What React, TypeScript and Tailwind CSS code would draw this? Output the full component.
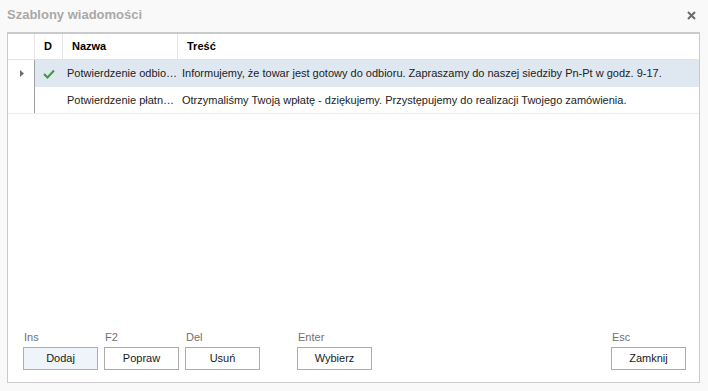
import React from "react";

type Szablon = { id: number; domyslny: boolean; nazwa: string; tresc: string };

// nazwy skrócone tak, jak pokazuje je siatka
const szablony: Szablon[] = [
  {
    id: 1,
    domyslny: true,
    nazwa: "Potwierdzenie odbio…",
    tresc: "Informujemy, że towar jest gotowy do odbioru. Zapraszamy do naszej siedziby Pn-Pt w godz. 9-17.",
  },
  {
    id: 2,
    domyslny: false,
    nazwa: "Potwierdzenie płatn…",
    tresc: "Otrzymaliśmy Twoją wpłatę - dziękujemy. Przystępujemy do realizacji Twojego zamówienia.",
  },
];

function Przycisk({ skrot, tekst, aktywny }: { skrot: string; tekst: string; aktywny?: boolean }) {
  return (
    <div className="flex flex-col w-[75px]">
      <span className="text-[11px] leading-[13px] text-[#707070] pl-[1px] mb-[3px]">{skrot}</span>
      <button
        className={
          aktywny
            ? "h-[23px] border border-[#9ab3c8] bg-[#eef4f9] text-[11px] text-[#1a1a1a]"
            : "h-[23px] border border-[#ababab] bg-white text-[11px] text-[#1a1a1a]"
        }
      >
        {tekst}
      </button>
    </div>
  );
}

export default function App() {
  return (
    <div
      className="w-[708px] h-[391px] bg-[#f9f9f9] flex flex-col"
      style={{ fontFamily: '"Liberation Sans", Arial, sans-serif' }}
    >
      {/* Pasek tytułu */}
      <div className="h-[32px] flex items-center justify-between pl-[7px] pr-[12px]">
        <span className="text-[13px] font-bold text-[#a9a9a9] -mt-[2px]">Szablony wiadomości</span>
        <svg width="9" height="9" viewBox="0 0 9 9" className="-mt-[2px]">
          <path d="M1 1 L8 8 M8 1 L1 8" stroke="#6b6b6b" strokeWidth="2" />
        </svg>
      </div>

      {/* Panel z listą */}
      <div className="ml-[7px] mr-[8px] h-[351px] bg-white border border-[#cacaca] border-t-2 flex flex-col">
        <div className="flex h-[26px] border-b border-[#e3e3e3] text-[11px] font-bold text-black">
          <div className="w-[27px] border-r border-[#e6e6e6]" />
          <div className="w-[28px] border-r border-[#e6e6e6] flex items-center justify-center pr-[1px]">D</div>
          <div className="w-[115px] border-r border-[#e6e6e6] flex items-center pl-[9px]">Nazwa</div>
          <div className="flex-1 flex items-center pl-[9px]">Treść</div>
        </div>

        {szablony.map((s, i) => (
          <div
            key={s.id}
            className={
              i === 0
                ? "flex h-[27px] text-[11px] text-[#222] bg-[#dfe8f1]"
                : "flex h-[27px] text-[11px] text-[#222] border-b border-[#ececec]"
            }
          >
            <div className="w-[27px] border-r border-[#a0a0a0] bg-white flex items-center justify-center pl-[1px]">
              {i === 0 && (
                <svg width="4" height="7" viewBox="0 0 4 7">
                  <path d="M0 0 L4 3.5 L0 7 Z" fill="#6e6e6e" />
                </svg>
              )}
            </div>
            <div className="w-[28px] flex items-center justify-center">
              {s.domyslny && (
                <svg width="12" height="10" viewBox="0 0 12 10">
                  <path d="M1 5 L4.5 8.5 L11 1.5" stroke="#3a9b3a" strokeWidth="2" fill="none" />
                </svg>
              )}
            </div>
            <div className="w-[115px] flex items-center pl-[4px] whitespace-nowrap">{s.nazwa}</div>
            <div className="flex-1 flex items-center pl-[4px] whitespace-nowrap">{s.tresc}</div>
          </div>
        ))}

        <div className="flex-1" />

        {/* Przyciski */}
        <div className="flex items-end pl-[15px] pr-[13px] pb-[12px]">
          <div className="flex gap-[6px]">
            <Przycisk skrot="Ins" tekst="Dodaj" aktywny />
            <Przycisk skrot="F2" tekst="Popraw" />
            <Przycisk skrot="Del" tekst="Usuń" />
          </div>
          <div className="ml-[37px]">
            <Przycisk skrot="Enter" tekst="Wybierz" />
          </div>
          <div className="ml-auto">
            <Przycisk skrot="Esc" tekst="Zamknij" />
          </div>
        </div>
      </div>
    </div>
  );
}
